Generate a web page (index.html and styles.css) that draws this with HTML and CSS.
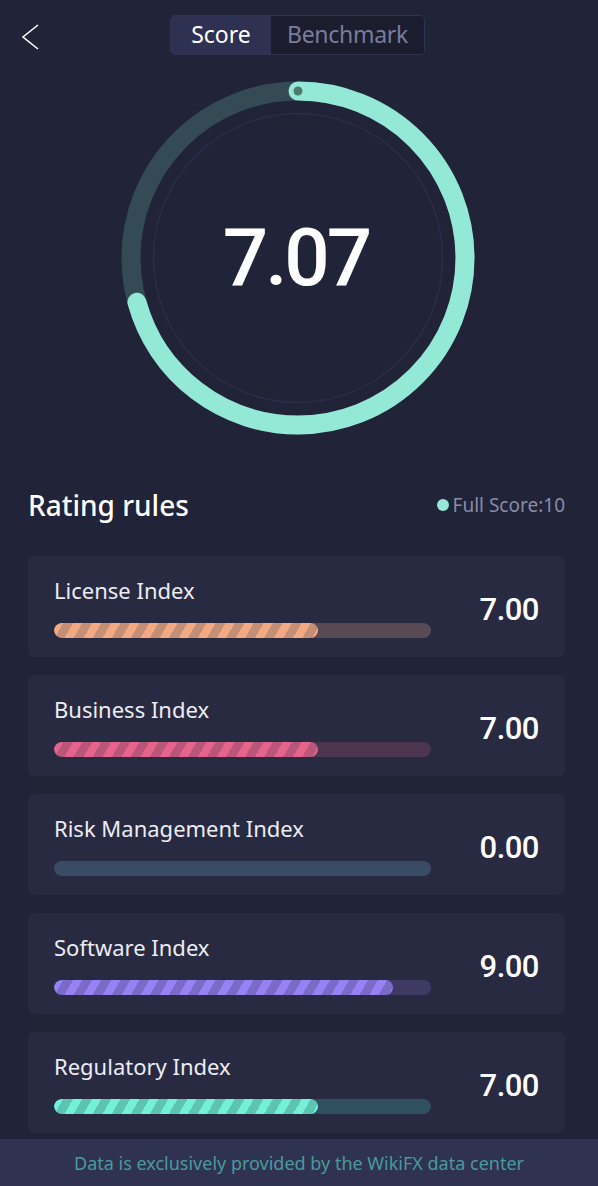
FILE: index.html
```html
<!DOCTYPE html>
<html lang="en">
<head>
  <meta charset="UTF-8" />
  <meta name="viewport" content="width=device-width, initial-scale=1.0" />
  <title>Score</title>
  <link rel="stylesheet" href="styles.css">
</head>
<body>
  <div class="page">
    <div class="header">
      <div class="back">
        <svg width="18" height="26" viewBox="0 0 18 26"><polyline points="17,1 2,13 17,25" fill="none" stroke="#fff" stroke-width="1.6"/></svg>
      </div>
      <div class="tabs">
        <div class="tab active">Score</div>
        <div class="tab">Benchmark</div>
      </div>
    </div>

    <div class="gauge">
      <div class="dial">
        <svg width="360" height="360" viewBox="0 0 360 360">
          <circle cx="180" cy="180" r="144.5" fill="none" stroke="#2c2d4b" stroke-width="1.5"/>
          <circle cx="180" cy="180" r="167" fill="none" stroke="#344b55" stroke-width="19"/>
          <circle cx="180" cy="180" r="167" fill="none" stroke="#94e9d6" stroke-width="19" stroke-linecap="round"
                  stroke-dasharray="741.9 2000" transform="rotate(-90 180 180)"/>
          <circle cx="180" cy="13" r="4.5" fill="#4b7b6c"/>
        </svg>
        <div class="score">7.07</div>
      </div>
    </div>

    <div class="rating-head">
      <h2>Rating rules</h2>
      <div class="full"><span class="dot"></span>Full Score:10</div>
    </div>

    <div class="list">
      <div class="card">
        <div class="info">
          <div class="label">License Index</div>
          <div class="bar license"><div class="fill" style="width: 70%"></div></div>
        </div>
        <div class="value">7.00</div>
      </div>
      <div class="card">
        <div class="info">
          <div class="label">Business Index</div>
          <div class="bar business"><div class="fill" style="width: 70%"></div></div>
        </div>
        <div class="value">7.00</div>
      </div>
      <div class="card">
        <div class="info">
          <div class="label">Risk Management Index</div>
          <div class="bar risk"><div class="fill" style="width: 0%"></div></div>
        </div>
        <div class="value">0.00</div>
      </div>
      <div class="card">
        <div class="info">
          <div class="label">Software Index</div>
          <div class="bar software"><div class="fill" style="width: 90%"></div></div>
        </div>
        <div class="value">9.00</div>
      </div>
      <div class="card">
        <div class="info">
          <div class="label">Regulatory Index</div>
          <div class="bar regulatory"><div class="fill" style="width: 70%"></div></div>
        </div>
        <div class="value">7.00</div>
      </div>
    </div>

    <div class="footer">Data is exclusively provided by the WikiFX data center</div>
  </div>
</body>
</html>
```

FILE: styles.css
```css
* { box-sizing: border-box; margin: 0; padding: 0; }
html, body { width: 100%; height: 100%; background: #212338; font-family: "Noto Sans", sans-serif; color: #fff; }
.page { width: 598px; min-height: 1186px; display: flex; flex-direction: column; }

.header { height: 70px; display: flex; align-items: flex-start; padding-top: 15px; }
.back { width: 170px; padding: 9px 0 0 21px; }
.back svg { display: block; }
.tabs { display: flex; height: 40px; border: 1px solid #30324f; border-radius: 5px; overflow: hidden; }
.tab { width: 153px; text-align: center; line-height: 37px; font-size: 23px; color: #7a7c9c; background: #1b1c2d; letter-spacing: -0.3px; }
.tab.active { width: 100px; color: #fff; background: #2f3152; letter-spacing: 0; }

.gauge { height: 400px; padding-top: 8px; display: flex; justify-content: center; }
.dial { position: relative; width: 360px; height: 360px; margin-left: -2px; }
.dial svg { display: block; }
.score { position: absolute; left: 0; right: 0; top: 0; bottom: 0; display: flex; align-items: center; justify-content: center; font-family: Roboto, sans-serif; font-size: 80px; font-weight: 500; letter-spacing: -3px; padding-right: 4px; }

.rating-head { height: 70px; margin-bottom: 16px; padding: 0 33px 0 28px; display: flex; align-items: center; justify-content: space-between; }
.rating-head h2 { font-size: 28px; font-weight: 500; }
.full { display: flex; align-items: center; font-size: 19px; color: #8a8ca6; }
.dot { width: 12px; height: 12px; border-radius: 50%; background: #94e9d6; margin-right: 4px; }

.list { display: flex; flex-direction: column; gap: 18px; padding: 0 33px 0 28px; }
.card { height: 101px; background: #282a41; border-radius: 6px; padding: 21px 26px 19px 26px; display: flex; align-items: center; justify-content: space-between; }
.info { width: 377px; }
.label { font-size: 22px; line-height: 27px; color: #ececf2; }
.bar { height: 15px; margin-top: 19px; border-radius: 8px; overflow: hidden; }
.fill { height: 100%; border-radius: 8px; }
.value { font-family: Roboto, sans-serif; font-size: 31px; font-weight: 500; letter-spacing: -0.5px; margin-top: 4px; }

.license { background: #574a54; }
.license .fill { background: repeating-linear-gradient(120deg, #f2aa84 0 8px, #c48f74 8px 16.5px); }
.business { background: #4b354f; }
.business .fill { background: repeating-linear-gradient(120deg, #e4648c 0 8px, #b9567a 8px 16.5px); }
.risk { background: #3a4b66; }
.software { background: #3e3a63; }
.software .fill { background: repeating-linear-gradient(120deg, #9682f2 0 8px, #7b6bc9 8px 16.5px); }
.regulatory { background: #2f5060; }
.regulatory .fill { background: repeating-linear-gradient(120deg, #74f0da 0 8px, #5dc4b2 8px 16.5px); }

.footer { margin-top: auto; height: 47px; background: #2f3250; color: #4a9a9c; font-size: 18px; display: flex; align-items: center; justify-content: center; }
```
